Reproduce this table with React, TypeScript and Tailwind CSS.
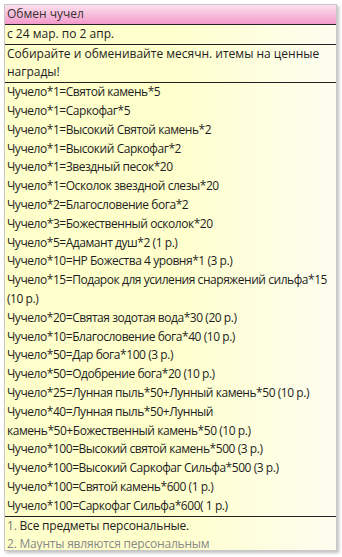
const items = [
  ['Чучело*1=Святой камень*5'],
  ['Чучело*1=Саркофаг*5'],
  ['Чучело*1=Высокий Святой камень*2'],
  ['Чучело*1=Высокий Саркофаг*2'],
  ['Чучело*1=Звездный песок*20'],
  ['Чучело*1=Осколок звездной слезы*20'],
  ['Чучело*2=Благословение бога*2'],
  ['Чучело*3=Божественный осколок*20'],
  ['Чучело*5=Адамант душ*2 (1 р.)'],
  ['Чучело*10=HP Божества 4 уровня*1 (3 р.)'],
  ['Чучело*15=Подарок для усиления снаряжений сильфа*15', '(10 р.)'],
  ['Чучело*20=Святая зодотая вода*30 (20 р.)'],
  ['Чучело*10=Благословение бога*40 (10 р.)'],
  ['Чучело*50=Дар бога*100 (3 р.)'],
  ['Чучело*50=Одобрение бога*20 (10 р.)'],
  ['Чучело*25=Лунная пыль*50+Лунный камень*50 (10 р.)'],
  ['Чучело*40=Лунная пыль*50+Лунный', 'камень*50+Божественный камень*50 (10 р.)'],
  ['Чучело*100=Высокий святой камень*500 (3 р.)'],
  ['Чучело*100=Высокий Саркофаг Сильфа*500 (3 р.)'],
  ['Чучело*100=Святой камень*600 (1 р.)'],
  ['Чучело*100=Саркофаг Сильфа*600( 1 р.)'],
]

export default function App() {
  return (
    <div className="h-[557px] w-[342px] overflow-hidden bg-white pl-[4px] pt-[4px]" style={{ fontFamily: '"Open Sans", "Noto Sans", sans-serif' }}>
      <div className="h-[547px] w-[333px] overflow-hidden border border-[#c8c8c8] bg-gradient-to-r from-[#ffffcc] via-[#ffffcc] to-[#fdfdf0] text-[12px] leading-[18.8px] text-[#1e1e1e] shadow-[2px_2px_3px_rgba(0,0,0,0.25)]">
        <div className="border-b border-[#222] bg-gradient-to-b from-[#fbe0ee] to-[#f39acb] px-[2px] text-[#333]">Обмен чучел</div>
        <div className="border-b border-[#222] px-[2px]">с 24 мар. по 2 апр.</div>
        <div className="border-b border-[#222] pl-[2px] pr-[14px]">Собирайте и обменивайте месячн. итемы на ценные награды!</div>
        <div className="border-b border-[#222] pl-[2px] tracking-[-0.45px]">
          {items.map((lines) => (
            <p key={lines[0]} className="whitespace-nowrap">
              {lines.map((l, i) => (
                <span key={i} className="block">{l}</span>
              ))}
            </p>
          ))}
        </div>
        <div className="px-[2px] tracking-[-0.2px]">
          <p><span className="text-[#777]">1.</span> Все предметы персональные.</p>
          <p className="text-[#888]">2. Маунты являются персональным</p>
        </div>
      </div>
    </div>
  )
}
